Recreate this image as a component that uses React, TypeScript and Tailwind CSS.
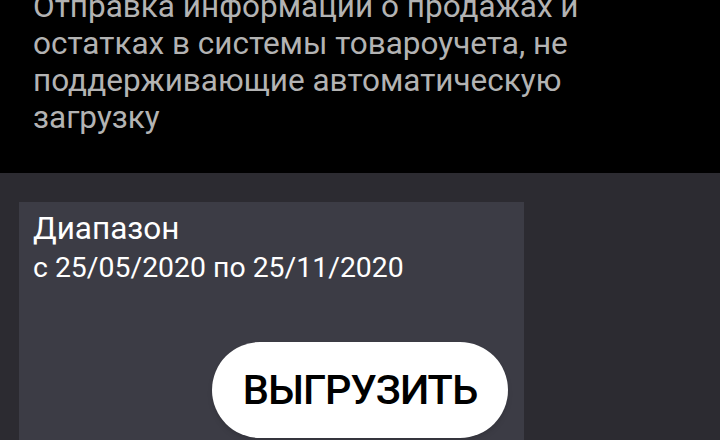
export default function App() {
  return (
    <div
      className="w-[720px] h-[440px] overflow-hidden bg-[#2c2b31] flex flex-col"
      style={{ fontFamily: "Roboto, 'Noto Sans', sans-serif" }}
    >
      <div className="h-[173px] shrink-0 bg-black overflow-hidden flex flex-col justify-end px-[33px] pb-[37px]">
        <p className="text-[31.5px] leading-[37px] text-[#b3b3b3] w-[600px]">
          Отправка информации о продажах и остатках в системы товароучета, не
          поддерживающие автоматическую загрузку
        </p>
      </div>
      <div className="pt-[29px] pl-[19px]">
        <div className="w-[505px] h-[300px] bg-[#3c3c45] pl-[14px] pr-[16px] pt-[8px] flex flex-col">
          <div className="text-[31.5px] leading-[38px] text-white">Диапазон</div>
          <div className="text-[28.4px] leading-[38px] text-white mt-[1px]">
            с 25/05/2020 по 25/11/2020
          </div>
          <div className="flex justify-end mt-[55px]">
            <button className="w-[296px] h-[96px] rounded-full bg-white text-black text-[41.5px] tracking-[-1px] font-medium shadow-md">
              ВЫГРУЗИТЬ
            </button>
          </div>
        </div>
      </div>
    </div>
  );
}
